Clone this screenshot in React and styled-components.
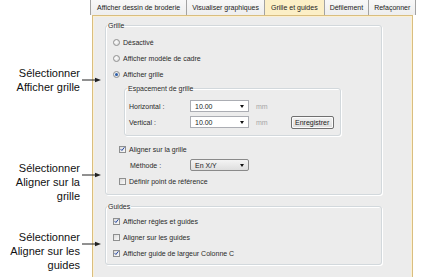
import React from 'react';
import styled, { createGlobalStyle } from 'styled-components';

const GlobalStyle = createGlobalStyle`
  html, body { margin: 0; padding: 0; background: #fff; }
  body { font-family: "Liberation Sans", Arial, sans-serif; }
`;

const Page = styled.div`
  display: flex;
  width: 426px;
  height: 277px;
  overflow: hidden;
  background: #fff;
`;

const Callouts = styled.div`
  width: 90px;
  flex: none;
  display: flex;
  flex-direction: column;
  position: relative;
  z-index: 2;
`;

const Callout = styled.div`
  position: relative;
  margin-top: ${p => p.$top}px;
  padding-right: 10px;
  text-align: right;
  font-size: 11px;
  line-height: 14px;
  color: #111;
`;

const Arrow = styled.svg`
  position: absolute;
  left: 82px;
  top: 11px;
  width: 19px;
  height: 6px;
`;

const Panel = styled.div`
  width: 323px;
  height: 292px;
  flex: none;
  display: flex;
  flex-direction: column;
`;

const TabStrip = styled.div`
  display: flex;
  height: 15px;
  flex: none;
`;

const Tab = styled.div`
  padding: 0 ${p => p.$pad ?? 5}px;
  font-size: 7px;
  line-height: 15px;
  color: #222;
  white-space: nowrap;
  border-right: 1px solid #a3a3a3;
  background: ${p => (p.$active ? '#fcefc6' : 'linear-gradient(#f8f8f8, #eeeeee)')};
  &:first-child { border-left: 1px solid #a3a3a3; }
`;

const Body = styled.div`
  flex: 1;
  margin-left: 2px;
  border: 1px solid #d9be80;
  box-shadow: inset 0 0 0 1px #fcf0d2;
  background: #ececec;
  padding: 5px 0 0 12px;
  display: flex;
  flex-direction: column;
`;

const Group = styled.fieldset`
  margin: ${p => p.$mt ?? 0}px 0 0 ${p => p.$ml ?? 0}px;
  padding: ${p => p.$pt ?? 0}px 0 ${p => p.$pb ?? 0}px ${p => p.$pl ?? 0}px;
  width: ${p => p.$w}px;
  box-sizing: border-box;
  min-width: 0;
  border: 1px solid #d2d8dc;
  border-radius: 3px;
  box-shadow: inset 1px 1px 0 #fff, 1px 1px 0 #fff;
  display: flex;
  flex-direction: column;
`;

const Legend = styled.legend`
  font-size: 7px;
  line-height: 9px;
  padding: 0 1px;
  margin-left: ${p => p.$ml ?? -6}px;
  color: #2a2a2a;
`;

const Row = styled.div`
  display: flex;
  align-items: center;
  height: ${p => p.$h ?? 16}px;
  padding-left: ${p => p.$pl ?? 0}px;
  font-size: 7px;
  color: #2a2a2a;
  white-space: nowrap;
`;

const Indent = styled.div`
  display: flex;
  flex-direction: column;
  margin-top: ${p => p.$mt ?? 0}px;
  padding-left: ${p => p.$pl ?? 0}px;
`;

const RadioDot = styled.span`
  width: 7px;
  height: 7px;
  box-sizing: border-box;
  border-radius: 50%;
  border: 1px solid #909090;
  background: radial-gradient(circle at 40% 40%, #fdfdfd, #d8d8d8);
  margin-right: 3px;
  display: flex;
  align-items: center;
  justify-content: center;
  &::after {
    content: '';
    display: ${p => (p.$on ? 'block' : 'none')};
    width: 3px;
    height: 3px;
    border-radius: 50%;
    background: #2a5ca8;
  }
`;

const Box = styled.span`
  width: 7px;
  height: 7px;
  box-sizing: border-box;
  border: 1px solid #8e8f8f;
  background: linear-gradient(135deg, #dcdcdc, #fafafa);
  margin-right: 3px;
  display: flex;
  align-items: center;
  justify-content: center;
  svg { width: 6px; height: 6px; }
`;

const Label = styled.span`
  width: ${p => p.$w}px;
  flex: none;
`;

const Combo = styled.div`
  width: 59px;
  height: 12px;
  box-sizing: border-box;
  border: 1px solid ${p => (p.$button ? '#8a8a8a' : '#abadb3')};
  border-radius: ${p => (p.$button ? 2 : 0)}px;
  background: ${p => (p.$button ? 'linear-gradient(#f4f4f4, #dedede)' : '#fff')};
  display: flex;
  align-items: center;
  justify-content: space-between;
  padding: 0 4px;
  font-size: 7px;
  color: #222;
  &::after {
    content: '';
    border-left: 2.5px solid transparent;
    border-right: 2.5px solid transparent;
    border-top: 3px solid #111;
  }
`;

const Unit = styled.span`
  margin-left: 7px;
  color: #a6a6a6;
`;

const Button = styled.div`
  margin-left: 23px;
  width: 43px;
  height: 13px;
  box-sizing: border-box;
  border: 1px solid #707070;
  border-radius: 2px;
  background: linear-gradient(#f2f2f2, #dddddd);
  box-shadow: inset 0 0 0 1px #fbfbfb;
  display: flex;
  align-items: center;
  justify-content: center;
  font-size: 7px;
  color: #222;
`;

const Radio = ({ on, children }) => (
  <Row>
    <RadioDot $on={on} />
    {children}
  </Row>
);

const Check = ({ on, children }) => (
  <Row>
    <Box>
      {on && (
        <svg viewBox="0 0 6 6">
          <path d="M0.8 3.2 L2.3 4.8 L5.3 0.9" fill="none" stroke="#2346a0" strokeWidth="1.2" />
        </svg>
      )}
    </Box>
    {children}
  </Row>
);

const CalloutArrow = () => (
  <Arrow viewBox="0 0 19 6">
    <line x1="0" y1="3" x2="14" y2="3" stroke="#222" strokeWidth="1" />
    <path d="M13 0.8 L19 3 L13 5.2 Z" fill="#222" />
  </Arrow>
);

const tabs = [
  { label: 'Afficher dessin de broderie', pad: 6 },
  { label: 'Visualiser graphiques', pad: 5 },
  { label: 'Grille et guides', pad: 6, active: true },
  { label: 'Défilement', pad: 5 },
  { label: 'Refaçonner', pad: 5 },
];

export default function App() {
  return (
    <Page>
      <GlobalStyle />
      <Callouts>
        <Callout $top={66}>
          Sélectionner<br />Afficher grille
          <CalloutArrow />
        </Callout>
        <Callout $top={67}>
          Sélectionner<br />Aligner sur la<br />grille
          <CalloutArrow />
        </Callout>
        <Callout $top={27}>
          Sélectionner<br />Aligner sur les<br />guides
          <CalloutArrow />
        </Callout>
      </Callouts>
      <Panel>
        <TabStrip>
          {tabs.map(t => (
            <Tab key={t.label} $pad={t.pad} $active={t.active}>{t.label}</Tab>
          ))}
        </TabStrip>
        <Body>
          <Group $w={277} $pt={4} $pb={5} $pl={7}>
            <Legend>Grille</Legend>
            <Radio>Désactivé</Radio>
            <Radio>Afficher modèle de cadre</Radio>
            <Radio on>Afficher grille</Radio>
            <Group $w={217} $mt={2} $ml={11} $pt={5} $pb={5} $pl={4}>
              <Legend $ml={-2}>Espacement de grille</Legend>
              <Row>
                <Label $w={61}>Horizontal :</Label>
                <Combo>10.00</Combo>
                <Unit>mm</Unit>
              </Row>
              <Row>
                <Label $w={61}>Vertical :</Label>
                <Combo>10.00</Combo>
                <Unit>mm</Unit>
                <Button>Enregistrer</Button>
              </Row>
            </Group>
            <Indent $mt={5} $pl={6}>
              <Check on>Aligner sur la grille</Check>
              <Row $pl={11}>
                <Label $w={60}>Méthode :</Label>
                <Combo $button>En X/Y</Combo>
              </Row>
              <Check>Définir point de référence</Check>
            </Indent>
          </Group>
          <Group $w={277} $mt={7} $pt={2} $pb={3} $pl={7}>
            <Legend>Guides</Legend>
            <Check on>Afficher règles et guides</Check>
            <Check>Aligner sur les guides</Check>
            <Check on>Afficher guide de largeur Colonne C</Check>
          </Group>
        </Body>
      </Panel>
    </Page>
  );
}
